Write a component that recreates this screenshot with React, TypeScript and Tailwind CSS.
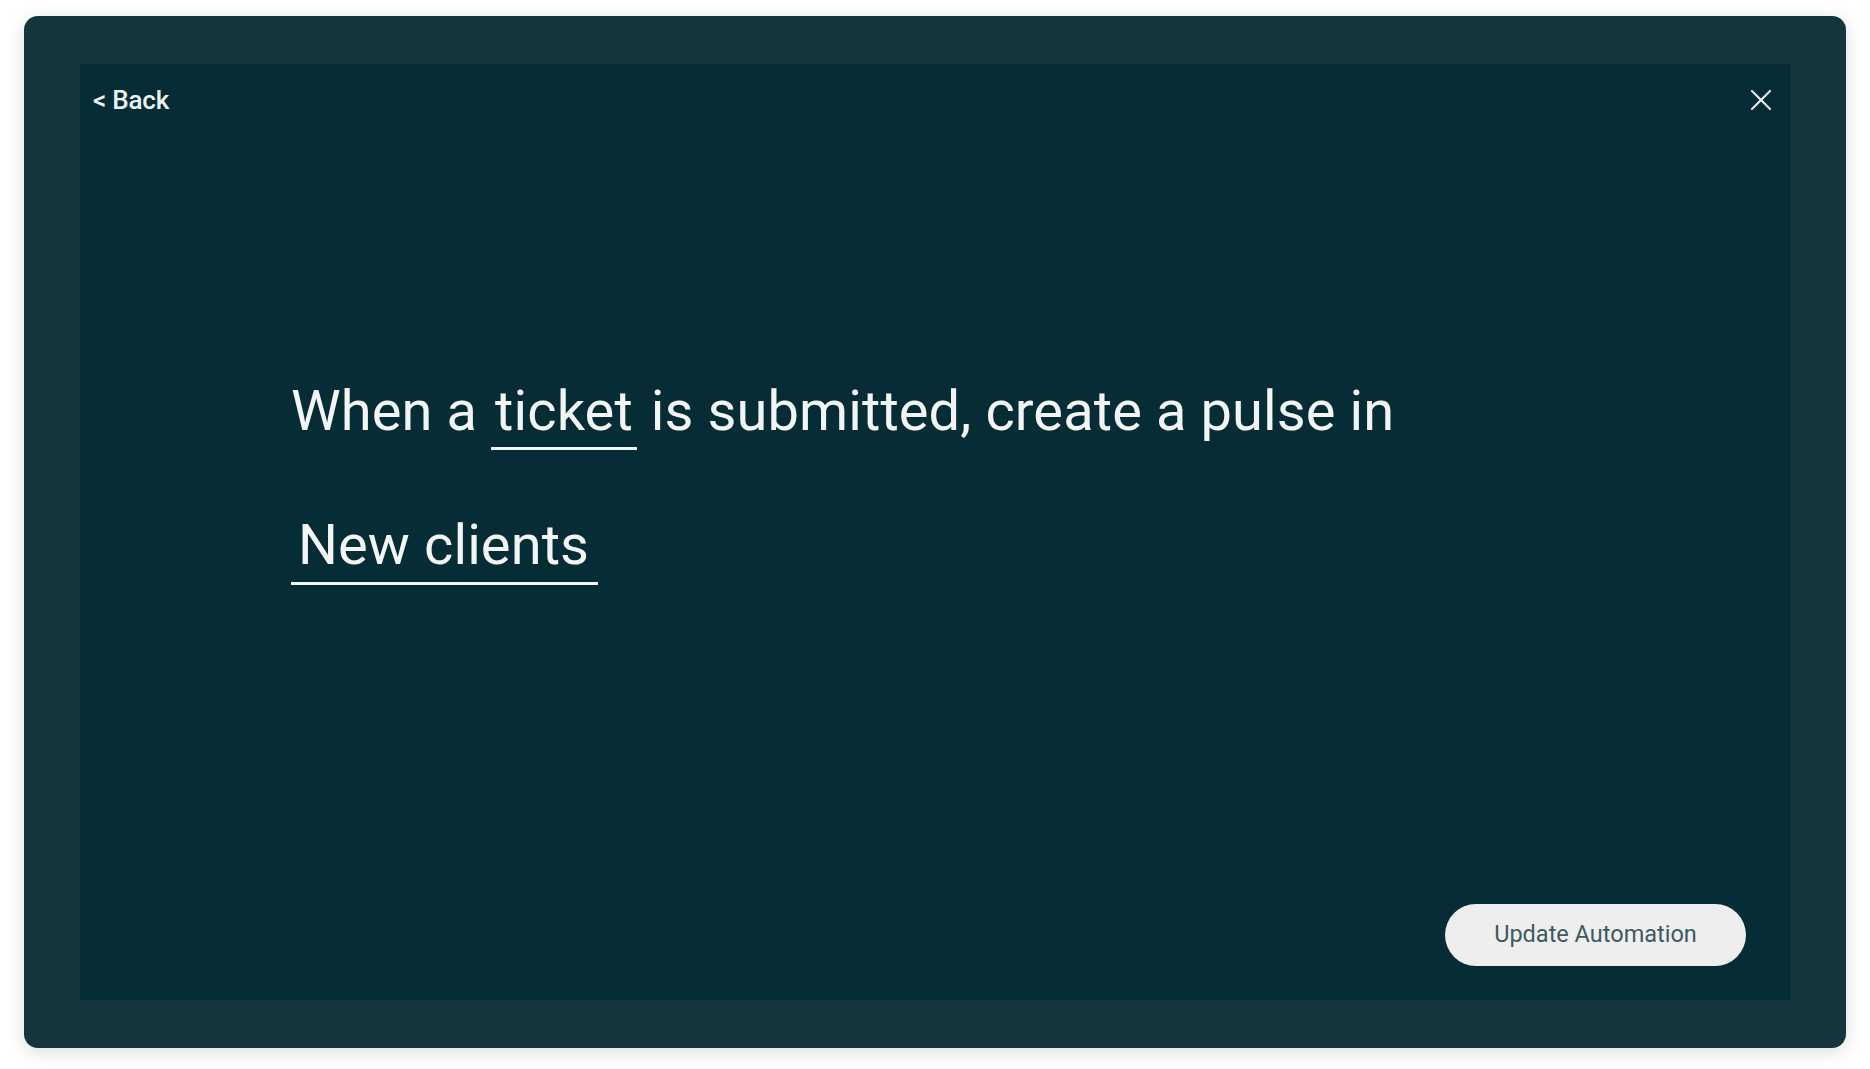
import React from 'react';

const CloseIcon: React.FC = () => (
  <svg width="22" height="22" viewBox="0 0 22 22" fill="none" stroke="#e8eeee" strokeWidth="2.2" strokeLinecap="round">
    <path d="M2 2L20 20" />
    <path d="M20 2L2 20" />
  </svg>
);

export default function App() {
  return (
    <div className="bg-white w-[1870px] h-[1069px] pt-4 px-6 font-['Roboto',sans-serif]">
      <div className="h-[1032px] rounded-[14px] bg-[#15353c] px-14 py-12 shadow-[0_4px_18px_rgba(0,0,0,0.14)]">
        <div className="h-full bg-[#062d35] flex flex-col">
          <div className="h-[72px] flex items-center justify-between pl-[13px] pr-[18px]">
            <button className="text-[26px] font-medium text-[#eef2f2] tracking-[-0.2px]">&lt; Back</button>
            <button aria-label="Close">
              <CloseIcon />
            </button>
          </div>

          <div className="flex-1 pl-[211px] pt-[243px] text-[#f3f5f5] text-[56px] tracking-[0.1px]">
            <div className="leading-[64px]">
              When a{' '}
              <span className="inline-block leading-none px-[4px] pb-[8px] border-b-[3px] border-[#f3f5f5]">ticket</span>{' '}
              is submitted, create a pulse in
            </div>
            <div className="mt-[63px] leading-[64px]">
              <span className="inline-block leading-none pl-[7px] pr-[9px] pb-[9px] border-b-[3px] border-[#f3f5f5]">
                New clients
              </span>
            </div>
          </div>

          <div className="flex justify-end pr-[44px] pb-[34px]">
            <button className="w-[301px] h-[62px] rounded-full bg-[#eeeeee] text-[#3d5a60] text-[23.5px]">
              Update Automation
            </button>
          </div>
        </div>
      </div>
    </div>
  );
}
